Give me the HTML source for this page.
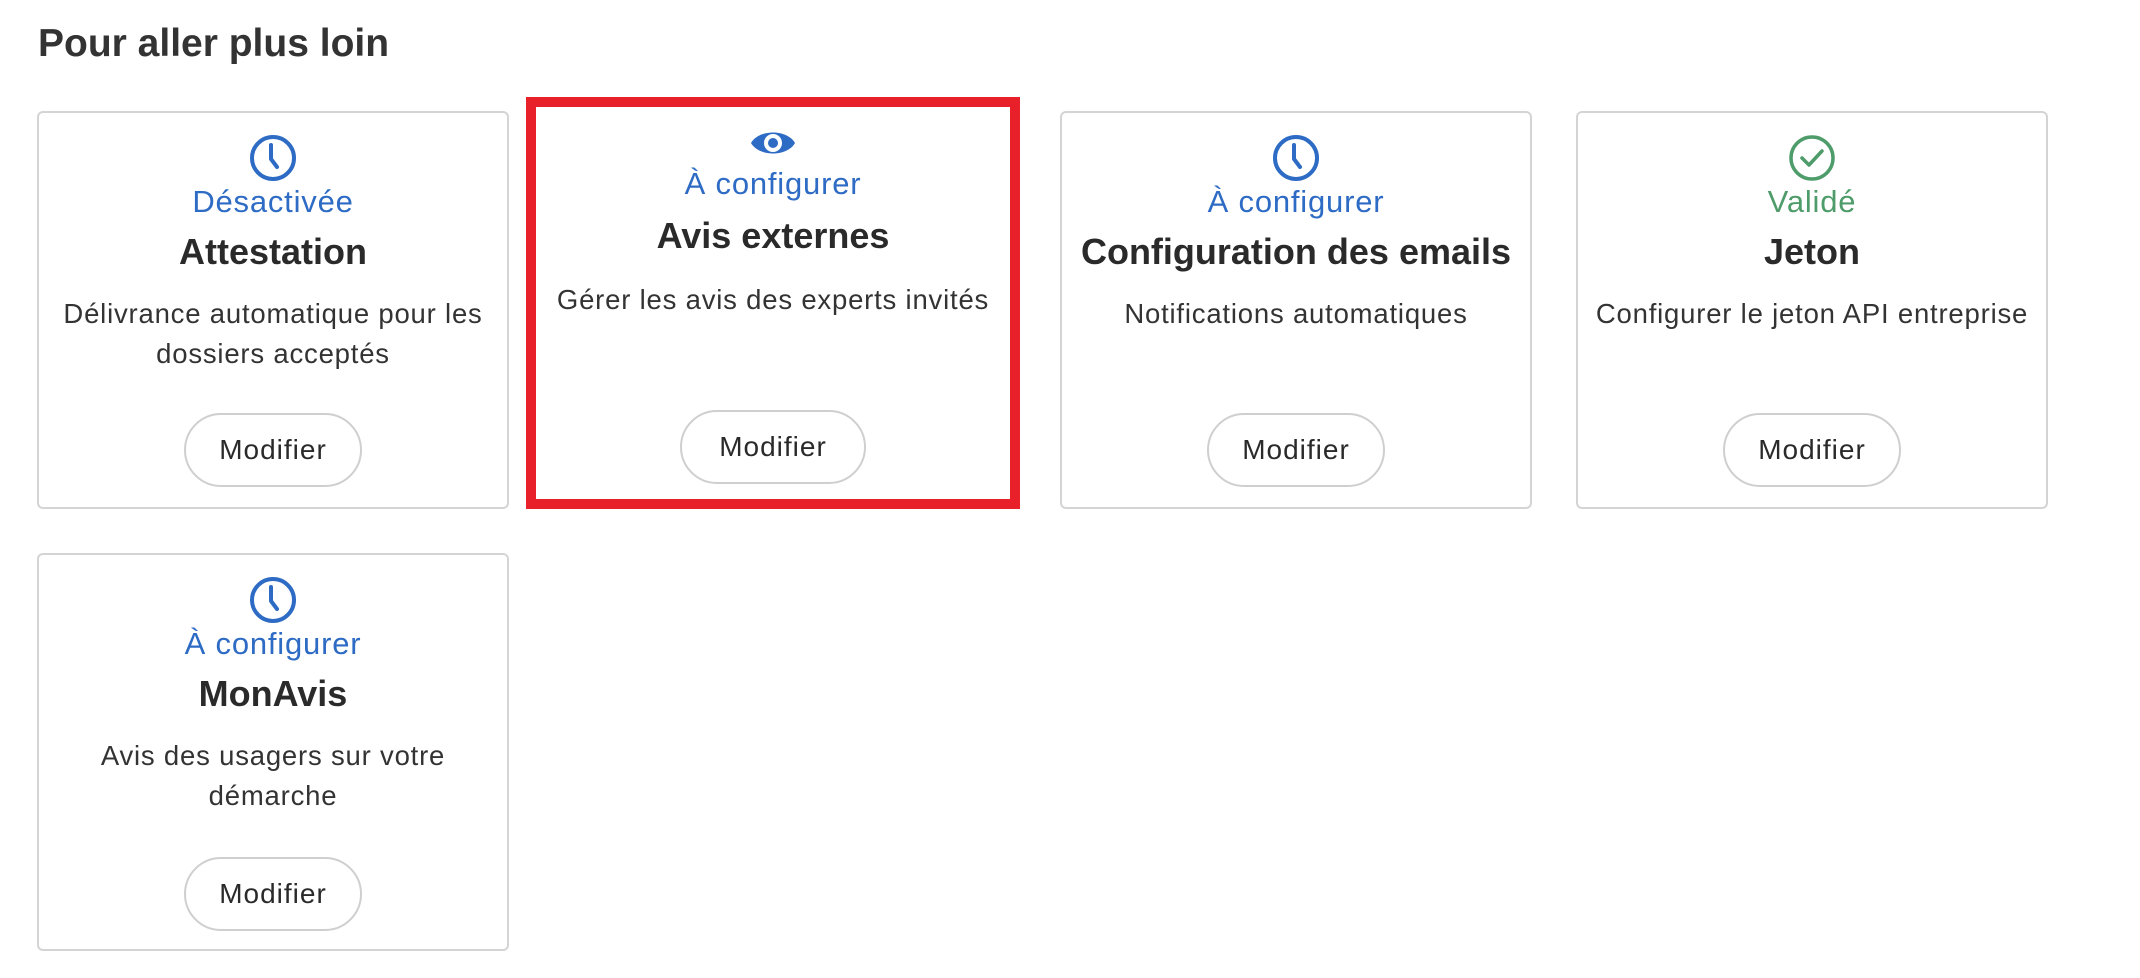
<!DOCTYPE html>
<html><head><meta charset="utf-8"><style>
*{margin:0;padding:0;box-sizing:border-box}
body{width:2140px;height:978px;background:#fff;font-family:"Liberation Sans",sans-serif;color:#333;position:relative;overflow:hidden}
h1{position:absolute;left:38px;top:22px;font-size:39px;font-weight:bold;color:#333;line-height:44px}
.card{position:absolute;width:472px;height:398px;border:2px solid #d4d4d4;border-radius:6px;text-align:center}
.card>*{position:absolute;left:0;right:0}
.ic{top:21px;height:48px;display:flex;justify-content:center}
.st{top:72px;font-size:31px;letter-spacing:0.8px;line-height:34px;color:#2d6bc4}
.st.g{color:#4f9c6b}
.tt{top:119px;font-size:36px;line-height:40px;font-weight:bold;color:#2a2a2a}
.ds{top:181px;font-size:27.5px;letter-spacing:0.8px;line-height:40px;padding:0 8px;color:#333}
.bt{top:300px;left:50%;right:auto;transform:translateX(-50%);width:178px;height:74px;border:2px solid #cfcfcf;border-radius:37px;font-size:28px;letter-spacing:1px;line-height:70px;color:#2a2a2a;background:#fff}
.red{position:absolute;left:526px;top:97px;width:494px;height:412px;border:10px solid #e8202a}
</style></head><body>
<h1>Pour aller plus loin</h1>

<div class="card" style="left:37px;top:111px">
 <div class="ic"><svg width="48" height="48" viewBox="0 0 48 48"><circle cx="24" cy="24" r="21" fill="none" stroke="#2d6bc4" stroke-width="4"/><path d="M22 11 V25 L28 33" fill="none" stroke="#2d6bc4" stroke-width="4" stroke-linecap="round" stroke-linejoin="round"/></svg></div>
 <div class="st">Désactivée</div>
 <div class="tt">Attestation</div>
 <div class="ds">Délivrance automatique pour les dossiers acceptés</div>
 <div class="bt">Modifier</div>
</div>

<div class="red"></div>
<div class="card" style="left:536px;top:105px;width:474px;border:none;height:394px">
 <div class="ic" style="top:21px;height:34px"><svg width="48" height="34" viewBox="0 0 48 34"><path d="M2 17 C10 3 38 3 46 17 C38 31 10 31 2 17Z" fill="#2d6bc4"/><circle cx="24" cy="17" r="9" fill="#fff"/><circle cx="24" cy="17" r="5" fill="#2d6bc4"/></svg></div>
 <div class="st" style="top:62px">À configurer</div>
 <div class="tt" style="top:111px">Avis externes</div>
 <div class="ds" style="top:175px">Gérer les avis des experts invités</div>
 <div class="bt" style="top:305px;width:186px">Modifier</div>
</div>

<div class="card" style="left:1060px;top:111px">
 <div class="ic"><svg width="48" height="48" viewBox="0 0 48 48"><circle cx="24" cy="24" r="21" fill="none" stroke="#2d6bc4" stroke-width="4"/><path d="M22 11 V25 L28 33" fill="none" stroke="#2d6bc4" stroke-width="4" stroke-linecap="round" stroke-linejoin="round"/></svg></div>
 <div class="st">À configurer</div>
 <div class="tt">Configuration des emails</div>
 <div class="ds">Notifications automatiques</div>
 <div class="bt">Modifier</div>
</div>

<div class="card" style="left:1576px;top:111px">
 <div class="ic"><svg width="48" height="48" viewBox="0 0 48 48"><circle cx="24" cy="24" r="21" fill="none" stroke="#4f9c6b" stroke-width="3.5"/><path d="M14 24 L21 31 L34 17" fill="none" stroke="#4f9c6b" stroke-width="3.5" stroke-linecap="round" stroke-linejoin="round"/></svg></div>
 <div class="st g">Validé</div>
 <div class="tt">Jeton</div>
 <div class="ds">Configurer le jeton API entreprise</div>
 <div class="bt">Modifier</div>
</div>

<div class="card" style="left:37px;top:553px;height:398px">
 <div class="ic"><svg width="48" height="48" viewBox="0 0 48 48"><circle cx="24" cy="24" r="21" fill="none" stroke="#2d6bc4" stroke-width="4"/><path d="M22 11 V25 L28 33" fill="none" stroke="#2d6bc4" stroke-width="4" stroke-linecap="round" stroke-linejoin="round"/></svg></div>
 <div class="st">À configurer</div>
 <div class="tt">MonAvis</div>
 <div class="ds">Avis des usagers sur votre démarche</div>
 <div class="bt" style="top:302px">Modifier</div>
</div>
</body></html>
